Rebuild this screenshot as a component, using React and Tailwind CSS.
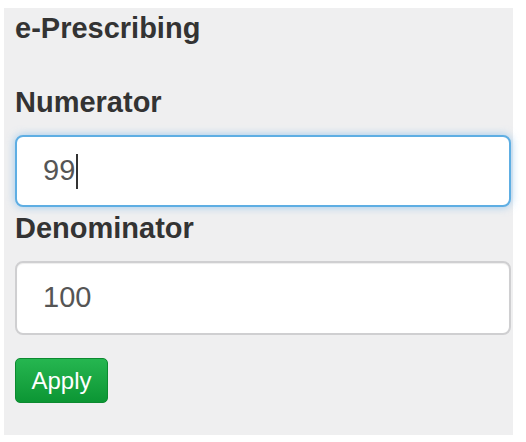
import React from 'react'

const App = () => {
  return (
    <div className="min-h-screen bg-white pt-[8px] pl-[4px]" style={{ fontFamily: '"Liberation Sans", Arial, sans-serif' }}>
      <div className="w-[509px] bg-[#efeff0] pl-[11px] pr-[2px] pt-[4px] pb-[32px]">
        <h2 className="text-[29px] leading-[32px] font-bold text-[#333]">e-Prescribing</h2>

        <label className="block mt-[42px] text-[29px] leading-[32px] font-bold text-[#333]">Numerator</label>
        <div className="mt-[17px] h-[72px] rounded-[8px] border-2 border-[#5eaee3] bg-white flex items-center pl-[26px] shadow-[0_0_8px_rgba(102,175,233,0.6)]">
          <span className="text-[29px] text-[#555]">99</span>
          <span className="ml-[1px] w-[1.5px] h-[35px] bg-[#333]" />
        </div>

        <label className="block mt-[5px] text-[29px] leading-[32px] font-bold text-[#333]">Denominator</label>
        <div className="mt-[17px] h-[74px] rounded-[8px] border-2 border-[#cfcfd1] bg-white flex items-center pl-[26px] shadow-[inset_0_1px_1px_rgba(0,0,0,0.075)]">
          <span className="text-[29px] text-[#555]">100</span>
        </div>

        <button className="mt-[23px] w-[93px] h-[45px] rounded-[5px] border border-[#0c8a30] bg-gradient-to-b from-[#25b650] to-[#0b9634] text-white text-[24px] leading-none flex items-center justify-center">
          Apply
        </button>
      </div>
    </div>
  )
}

export default App
